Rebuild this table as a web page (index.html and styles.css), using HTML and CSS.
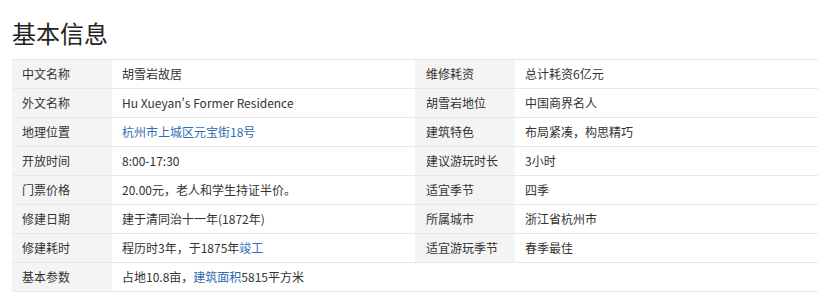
FILE: index.html
```html
<!DOCTYPE html>
<html lang="zh">
<head>
<meta charset="utf-8">
<title>基本信息</title>
<link rel="stylesheet" href="styles.css">
</head>
<body>
<div class="page">
  <h1 class="title">基本信息</h1>
  <div class="info">
    <dl class="col">
      <div class="row"><dt>中文名称</dt><dd>胡雪岩故居</dd></div>
      <div class="row"><dt>外文名称</dt><dd>Hu Xueyan's Former Residence</dd></div>
      <div class="row"><dt>地理位置</dt><dd><a class="link">杭州市上城区元宝街18号</a></dd></div>
      <div class="row"><dt>开放时间</dt><dd>8:00-17:30</dd></div>
      <div class="row"><dt>门票价格</dt><dd>20.00元，老人和学生持证半价。</dd></div>
      <div class="row"><dt>修建日期</dt><dd>建于清同治十一年(1872年)</dd></div>
      <div class="row"><dt>修建耗时</dt><dd>程历时3年，于1875年<a class="link">竣工</a></dd></div>
      <div class="row"><dt>基本参数</dt><dd>占地10.8亩，<a class="link">建筑面积</a>5815平方米</dd></div>
    </dl>
    <dl class="col">
      <div class="row"><dt>维修耗资</dt><dd>总计耗资6亿元</dd></div>
      <div class="row"><dt>胡雪岩地位</dt><dd>中国商界名人</dd></div>
      <div class="row"><dt>建筑特色</dt><dd>布局紧凑，构思精巧</dd></div>
      <div class="row"><dt>建议游玩时长</dt><dd>3小时</dd></div>
      <div class="row"><dt>适宜季节</dt><dd>四季</dd></div>
      <div class="row"><dt>所属城市</dt><dd>浙江省杭州市</dd></div>
      <div class="row"><dt>适宜游玩季节</dt><dd>春季最佳</dd></div>
      <div class="row row-empty"></div>
    </dl>
  </div>
</div>
</body>
</html>
```
FILE: styles.css
```css
html, body {
  margin: 0;
  padding: 0;
  background: #fff;
}
body {
  font-family: "Noto Sans CJK SC", "Noto Sans", sans-serif;
  color: #333;
}
.page {
  padding: 17px 8px 0 12px;
}
.title {
  margin: 0 0 10px 0;
  font-size: 24px;
  line-height: 32px;
  font-weight: 400;
  color: #222;
}
.info {
  display: grid;
  grid-template-columns: 403px 403px;
  border-top: 1px solid #e8e8e8;
}
.col {
  margin: 0;
  display: flex;
  flex-direction: column;
}
.row {
  display: grid;
  grid-template-columns: 100px 1fr;
  height: 28px;
  border-bottom: 1px solid #e8e8e8;
  font-size: 12px;
  line-height: 28px;
}
.row dt {
  background: #f4f4f4;
  padding-left: 10px;
  color: #333;
}
.row dd {
  margin: 0;
  padding-left: 10px;
  color: #333;
  white-space: nowrap;
}
.col + .col .row dt {
  padding-left: 11px;
}
.link {
  color: #2f6db3;
  text-decoration: none;
}
```
